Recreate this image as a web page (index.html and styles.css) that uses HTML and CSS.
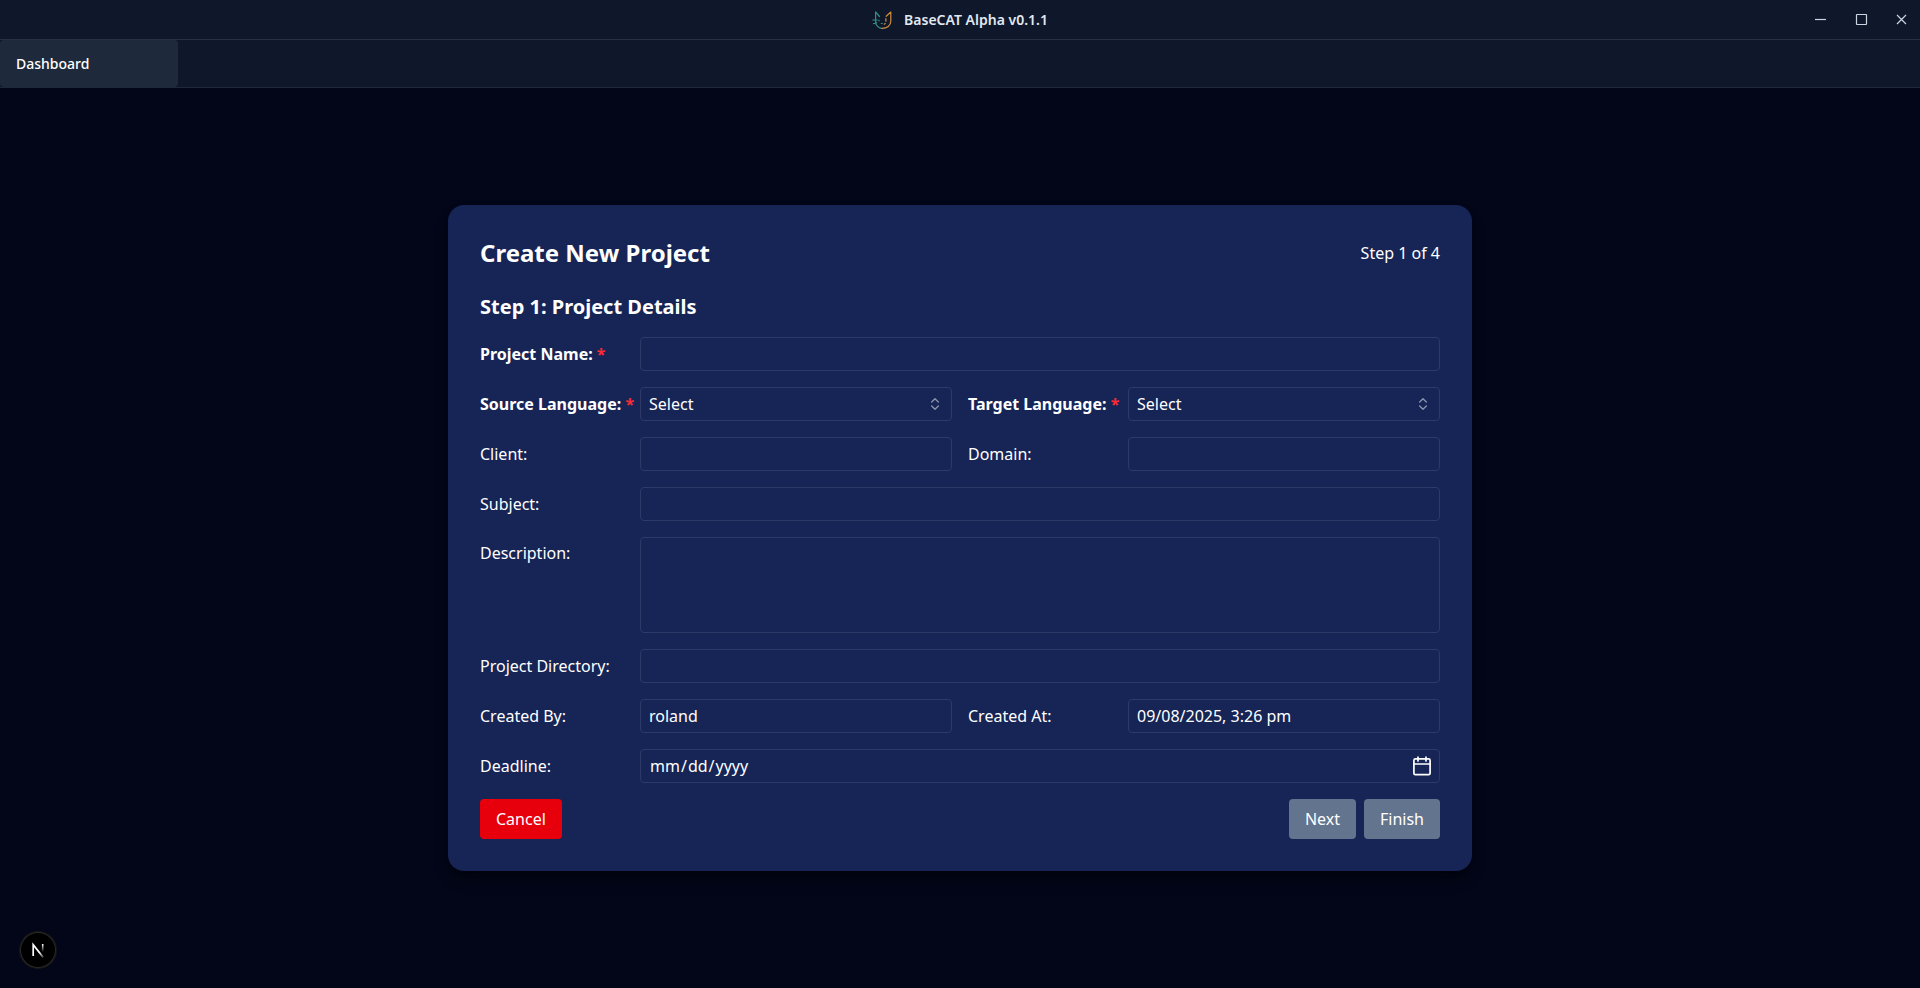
FILE: index.html
```html
<!DOCTYPE html>
<html lang="en">
<head>
<meta charset="utf-8">
<title>BaseCAT Alpha v0.1.1</title>
<link rel="stylesheet" href="styles.css">
</head>
<body>
<header class="titlebar">
  <div class="brand">
    <svg class="brand-logo" viewBox="0 0 20 20" fill="none" stroke-width="1.2" stroke-linecap="round" stroke-linejoin="round" aria-hidden="true">
      <path stroke="#2f8f88" d="M7.500 6.500 3.600 2v9.500c0 2.600 1.300 4.700 3.500 6 1 .6 2 .8 3 .8M.8 10h4.400M1.600 13.600l3-.9M7 10.200v.6M9.300 13.500h1"/>
      <path stroke="#d28c3c" d="M10 18.300c5 0 8.800-2.600 8.800-7V2l-4.600 4.300M13.900 8.600v2.600M12.200 14.200l1-.6"/>
    </svg>
    <span class="brand-name">BaseCAT Alpha v0.1.1</span>
  </div>
  <div class="window-controls">
    <button class="window-button" type="button" aria-label="Minimize"><svg viewBox="0 0 17 17"><path d="M3 8.500h11"/></svg></button>
    <button class="window-button" type="button" aria-label="Maximize"><svg viewBox="0 0 17 17"><rect x="3.500" y="3.500" width="10" height="10" rx=".5"/></svg></button>
    <button class="window-button" type="button" aria-label="Close"><svg viewBox="0 0 17 17"><path d="m4 4 9 9M13 4l-9 9"/></svg></button>
  </div>
</header>
<nav class="tabs"><button class="tab" type="button">Dashboard</button></nav>
<main class="workspace">
  <form class="card">
    <div class="card-header">
      <h1 class="card-title">Create New Project</h1>
      <span>Step 1 of 4</span>
    </div>
    <h2 class="step-title">Step 1: Project Details</h2>
    <div class="fields">
      <div class="field field-wide">
        <label class="label label-required" for="name">Project Name: <span class="asterisk">*</span></label>
        <input class="control" id="name" type="text">
      </div>
      <div class="field">
        <label class="label label-required" for="source">Source Language: <span class="asterisk">*</span></label>
        <div class="control-wrap">
          <select class="control" id="source"><option>Select</option></select>
          <svg class="select-icon" viewBox="0 0 24 24" aria-hidden="true"><path d="m7 15 5 5 5-5M7 9l5-5 5 5"/></svg>
        </div>
      </div>
      <div class="field">
        <label class="label label-required" for="target">Target Language: <span class="asterisk">*</span></label>
        <div class="control-wrap">
          <select class="control" id="target"><option>Select</option></select>
          <svg class="select-icon" viewBox="0 0 24 24" aria-hidden="true"><path d="m7 15 5 5 5-5M7 9l5-5 5 5"/></svg>
        </div>
      </div>
      <div class="field">
        <label class="label" for="client">Client:</label>
        <input class="control" id="client" type="text">
      </div>
      <div class="field">
        <label class="label" for="domain">Domain:</label>
        <input class="control" id="domain" type="text">
      </div>
      <div class="field field-wide">
        <label class="label" for="subject">Subject:</label>
        <input class="control" id="subject" type="text">
      </div>
      <div class="field field-wide field-top">
        <label class="label" for="description">Description:</label>
        <textarea class="control control-area" id="description"></textarea>
      </div>
      <div class="field field-wide">
        <label class="label" for="directory">Project Directory:</label>
        <input class="control" id="directory" type="text">
      </div>
      <div class="field">
        <label class="label" for="created-by">Created By:</label>
        <input class="control" id="created-by" type="text" value="roland" readonly>
      </div>
      <div class="field">
        <label class="label" for="created-at">Created At:</label>
        <input class="control" id="created-at" type="text" value="09/08/2025, 3:26 pm" readonly>
      </div>
      <div class="field field-wide">
        <label class="label" for="deadline">Deadline:</label>
        <div class="control-wrap">
          <input class="control control-date" id="deadline" type="date">
          <svg class="date-icon" viewBox="0 0 20 20" aria-hidden="true"><rect x="1.900" y="2.900" width="16.200" height="15.800" rx="1.500"/><path d="M1.900 8h16.200M6 1v4M14 1v4"/></svg>
        </div>
      </div>
    </div>
    <div class="actions">
      <button class="button button-cancel" type="button">Cancel</button>
      <div class="actions-end">
        <button class="button" type="button">Next</button>
        <button class="button" type="button">Finish</button>
      </div>
    </div>
  </form>
</main>
<button class="dev-badge" type="button" aria-label="Developer tools">
  <svg viewBox="0 0 36 36" fill="none" aria-hidden="true">
    <defs>
      <linearGradient id="diag" x1="20" y1="20" x2="24" y2="25" gradientUnits="userSpaceOnUse"><stop stop-color="#fff"/><stop offset="1" stop-color="#fff" stop-opacity=".2"/></linearGradient>
      <linearGradient id="stem" x1="0" y1="12" x2="0" y2="20" gradientUnits="userSpaceOnUse"><stop stop-color="#fff"/><stop offset="1" stop-color="#fff" stop-opacity="0"/></linearGradient>
    </defs>
    <path d="M13.200 24V12.800L23.200 25.400" stroke="url(#diag)" stroke-width="1.700"/>
    <path d="M22.700 12v8" stroke="url(#stem)" stroke-width="1.600"/>
  </svg>
</button>
</body>
</html>
```
FILE: styles.css
```css
*, *::before, *::after { box-sizing: border-box; }
body {
  margin: 0;
  min-height: 100vh;
  display: flex;
  flex-direction: column;
  background: #020618;
  color: #fff;
  font: 16px/24px "Noto Sans", sans-serif;
}
button, input, select, textarea { font: inherit; color: inherit; }
button { border: 0; padding: 0; cursor: pointer; }

.titlebar {
  display: grid;
  grid-template-columns: 1fr auto 1fr;
  align-items: center;
  height: 40px;
  background: #0f172a;
  border-bottom: 1px solid #273142;
}
.brand { grid-column: 2; display: flex; align-items: center; gap: 12px; }
.brand-logo { width: 20px; height: 20px; }
.brand-name { color: #e2e8f0; font-size: 14px; line-height: 20px; font-weight: 600; }
.window-controls { display: flex; justify-content: flex-end; }
.window-button {
  display: grid;
  place-items: center;
  width: 41px;
  height: 39px;
  background: none;
}
.window-button:last-child { width: 38px; }
.window-button svg { width: 17px; height: 17px; fill: none; stroke: #cbd5e1; stroke-width: 1.2; }

.tabs { display: flex; height: 48px; background: #0f172a; border-bottom: 1px solid #1e293b; }
.tab {
  width: 178px;
  padding: 0 16px;
  border-radius: 4px;
  background: #1e293b;
  text-align: left;
  font-size: 14px;
  line-height: 20px;
  font-weight: 500;
}

.workspace { flex: 1; display: grid; place-items: center; }
.card {
  width: 100%;
  max-width: 1024px;
  padding: 32px;
  border-radius: 16px;
  background: #162456;
  box-shadow: 0 10px 15px -3px rgb(0 0 0 / 40%), 0 4px 6px -4px rgb(0 0 0 / 40%);
}
.card-header { display: flex; align-items: center; justify-content: space-between; margin-bottom: 24px; }
.card-title { margin: 0; font-size: 24px; line-height: 32px; font-weight: 700; }
.step-title { margin: 0 0 16px; font-size: 20px; line-height: 28px; font-weight: 700; }

.fields { display: grid; grid-template-columns: 1fr 1fr; gap: 16px; }
.field { display: grid; grid-template-columns: 160px 1fr; align-items: center; }
.field-wide { grid-column: 1 / -1; }
.field-top { align-items: start; }
.field-top .label { padding-top: 4px; }
.label-required { font-weight: 700; }
.asterisk { color: #fb2c36; }
.control-wrap { position: relative; }
.control {
  display: block;
  width: 100%;
  height: 34px;
  margin: 0;
  padding: 4px 8px;
  border: 1px solid #2d3a67;
  border-radius: 4px;
  background: transparent;
  appearance: none;
  outline: 0;
}
.control-area { height: 96px; resize: none; }
.control-date::-webkit-calendar-picker-indicator { opacity: 0; }
.select-icon, .date-icon {
  position: absolute;
  top: 50%;
  transform: translateY(-50%);
  fill: none;
  stroke: #fff;
  stroke-linecap: round;
  stroke-linejoin: round;
  pointer-events: none;
}
.select-icon { right: 9px; width: 16px; height: 16px; stroke-width: 2; opacity: .5; }
.date-icon { right: 8px; width: 20px; height: 20px; stroke-width: 1.7; }

.actions { display: flex; justify-content: space-between; margin-top: 16px; }
.actions-end { display: flex; gap: 8px; }
.button { padding: 8px 16px; border-radius: 4px; background: #62748e; }
.button-cancel { background: #e7000b; }

.dev-badge {
  position: fixed;
  left: 20px;
  bottom: 20px;
  width: 36px;
  height: 36px;
  border-radius: 50%;
  background: #000;
  box-shadow: 0 0 0 1px #171717, inset 0 0 0 1px #2a2a2a;
}
.dev-badge svg { display: block; width: 36px; height: 36px; }
```
